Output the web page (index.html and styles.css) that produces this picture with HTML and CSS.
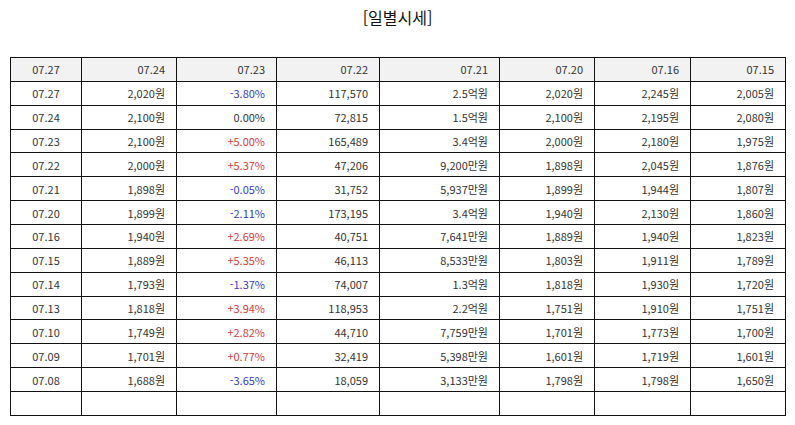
FILE: index.html
```html
<!DOCTYPE html>
<html lang="ko">
<head>
<meta charset="utf-8">
<title>일별시세</title>
<link rel="stylesheet" href="styles.css">
</head>
<body>
<div class="page">
  <h2 class="title">[일별시세]</h2>
  <table class="quotes">
    <colgroup>
      <col class="c1"><col class="c2"><col class="c3"><col class="c4"><col class="c5"><col class="c6"><col class="c7"><col class="c8">
    </colgroup>
    <thead>
      <tr><th class="center">07.27</th><th>07.24</th><th>07.23</th><th>07.22</th><th>07.21</th><th>07.20</th><th>07.16</th><th>07.15</th></tr>
    </thead>
    <tbody>
      <tr><td class="center">07.27</td><td>2,020원</td><td class="down">-3.80%</td><td>117,570</td><td>2.5억원</td><td>2,020원</td><td>2,245원</td><td>2,005원</td></tr>
      <tr><td class="center">07.24</td><td>2,100원</td><td>0.00%</td><td>72,815</td><td>1.5억원</td><td>2,100원</td><td>2,195원</td><td>2,080원</td></tr>
      <tr><td class="center">07.23</td><td>2,100원</td><td class="up">+5.00%</td><td>165,489</td><td>3.4억원</td><td>2,000원</td><td>2,180원</td><td>1,975원</td></tr>
      <tr><td class="center">07.22</td><td>2,000원</td><td class="up">+5.37%</td><td>47,206</td><td>9,200만원</td><td>1,898원</td><td>2,045원</td><td>1,876원</td></tr>
      <tr><td class="center">07.21</td><td>1,898원</td><td class="down">-0.05%</td><td>31,752</td><td>5,937만원</td><td>1,899원</td><td>1,944원</td><td>1,807원</td></tr>
      <tr><td class="center">07.20</td><td>1,899원</td><td class="down">-2.11%</td><td>173,195</td><td>3.4억원</td><td>1,940원</td><td>2,130원</td><td>1,860원</td></tr>
      <tr><td class="center">07.16</td><td>1,940원</td><td class="up">+2.69%</td><td>40,751</td><td>7,641만원</td><td>1,889원</td><td>1,940원</td><td>1,823원</td></tr>
      <tr><td class="center">07.15</td><td>1,889원</td><td class="up">+5.35%</td><td>46,113</td><td>8,533만원</td><td>1,803원</td><td>1,911원</td><td>1,789원</td></tr>
      <tr><td class="center">07.14</td><td>1,793원</td><td class="down">-1.37%</td><td>74,007</td><td>1.3억원</td><td>1,818원</td><td>1,930원</td><td>1,720원</td></tr>
      <tr><td class="center">07.13</td><td>1,818원</td><td class="up">+3.94%</td><td>118,953</td><td>2.2억원</td><td>1,751원</td><td>1,910원</td><td>1,751원</td></tr>
      <tr><td class="center">07.10</td><td>1,749원</td><td class="up">+2.82%</td><td>44,710</td><td>7,759만원</td><td>1,701원</td><td>1,773원</td><td>1,700원</td></tr>
      <tr><td class="center">07.09</td><td>1,701원</td><td class="up">+0.77%</td><td>32,419</td><td>5,398만원</td><td>1,601원</td><td>1,719원</td><td>1,601원</td></tr>
      <tr><td class="center">07.08</td><td>1,688원</td><td class="down">-3.65%</td><td>18,059</td><td>3,133만원</td><td>1,798원</td><td>1,798원</td><td>1,650원</td></tr>
      <tr class="empty"><td></td><td></td><td></td><td></td><td></td><td></td><td></td><td></td></tr>
    </tbody>
  </table>
</div>
</body>
</html>
```

FILE: styles.css
```css
html, body {
  margin: 0;
  padding: 0;
  background: #ffffff;
}

.page {
  padding: 6px 10px 0 10px;
  font-family: "Noto Sans CJK KR", "Noto Sans", sans-serif;
  color: #333333;
}

.title {
  margin: 0;
  height: 24px;
  line-height: 22px;
  font-size: 16px;
  font-weight: normal;
  text-align: center;
  color: #111111;
}

.quotes {
  margin-top: 27px;
  width: 775px;
  border-collapse: collapse;
  table-layout: fixed;
  font-size: 11px;
}

.c1 { width: 71px; }
.c2 { width: 95px; }
.c3 { width: 100px; }
.c4 { width: 103px; }
.c5 { width: 120px; }
.c6 { width: 95px; }
.c7 { width: 96px; }
.c8 { width: 95px; }

.quotes th,
.quotes td {
  border: 1px solid #111111;
  height: 22.87px;
  padding: 0 11px 0 0;
  text-align: right;
  font-weight: normal;
  line-height: 14px;
  white-space: nowrap;
}

.quotes th {
  background: #f2f2f2;
}

.quotes .center {
  text-align: center;
  padding: 0;
}

.quotes .up {
  color: #e03a3a;
}

.quotes .down {
  color: #3a3acc;
}
```
